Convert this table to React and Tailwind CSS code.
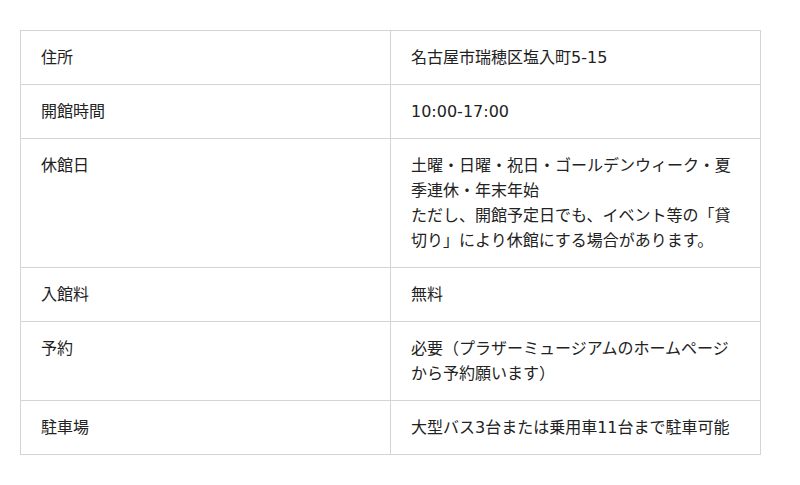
const rows = [
  { label: '住所', value: ['名古屋市瑞穂区塩入町5-15'] },
  { label: '開館時間', value: ['10:00-17:00'] },
  {
    label: '休館日',
    value: [
      '土曜・日曜・祝日・ゴールデンウィーク・夏季連休・年末年始',
      'ただし、開館予定日でも、イベント等の「貸切り」により休館にする場合があります。',
    ],
  },
  { label: '入館料', value: ['無料'] },
  { label: '予約', value: ['必要（プラザーミュージアムのホームページから予約願います）'] },
  { label: '駐車場', value: ['大型バス3台または乗用車11台まで駐車可能'] },
]

export default function App() {
  return (
    <div className="min-h-[485px] bg-white pl-[20px] pt-[30px] font-['DejaVu_Sans','Noto_Sans_CJK_JP',sans-serif] text-[16px] leading-[25px] text-[#222]">
      <table className="w-[741px] table-fixed border-collapse">
        <tbody>
          {rows.map((row) => (
            <tr key={row.label}>
              <td className="border border-[#d4d4d4] px-[20px] pb-[14px] pt-[14px] align-top">{row.label}</td>
              <td className="border border-[#d4d4d4] px-[20px] pb-[14px] pt-[14px] align-top">
                {row.value.map((line) => (
                  <div key={line}>{line}</div>
                ))}
              </td>
            </tr>
          ))}
        </tbody>
      </table>
    </div>
  )
}
